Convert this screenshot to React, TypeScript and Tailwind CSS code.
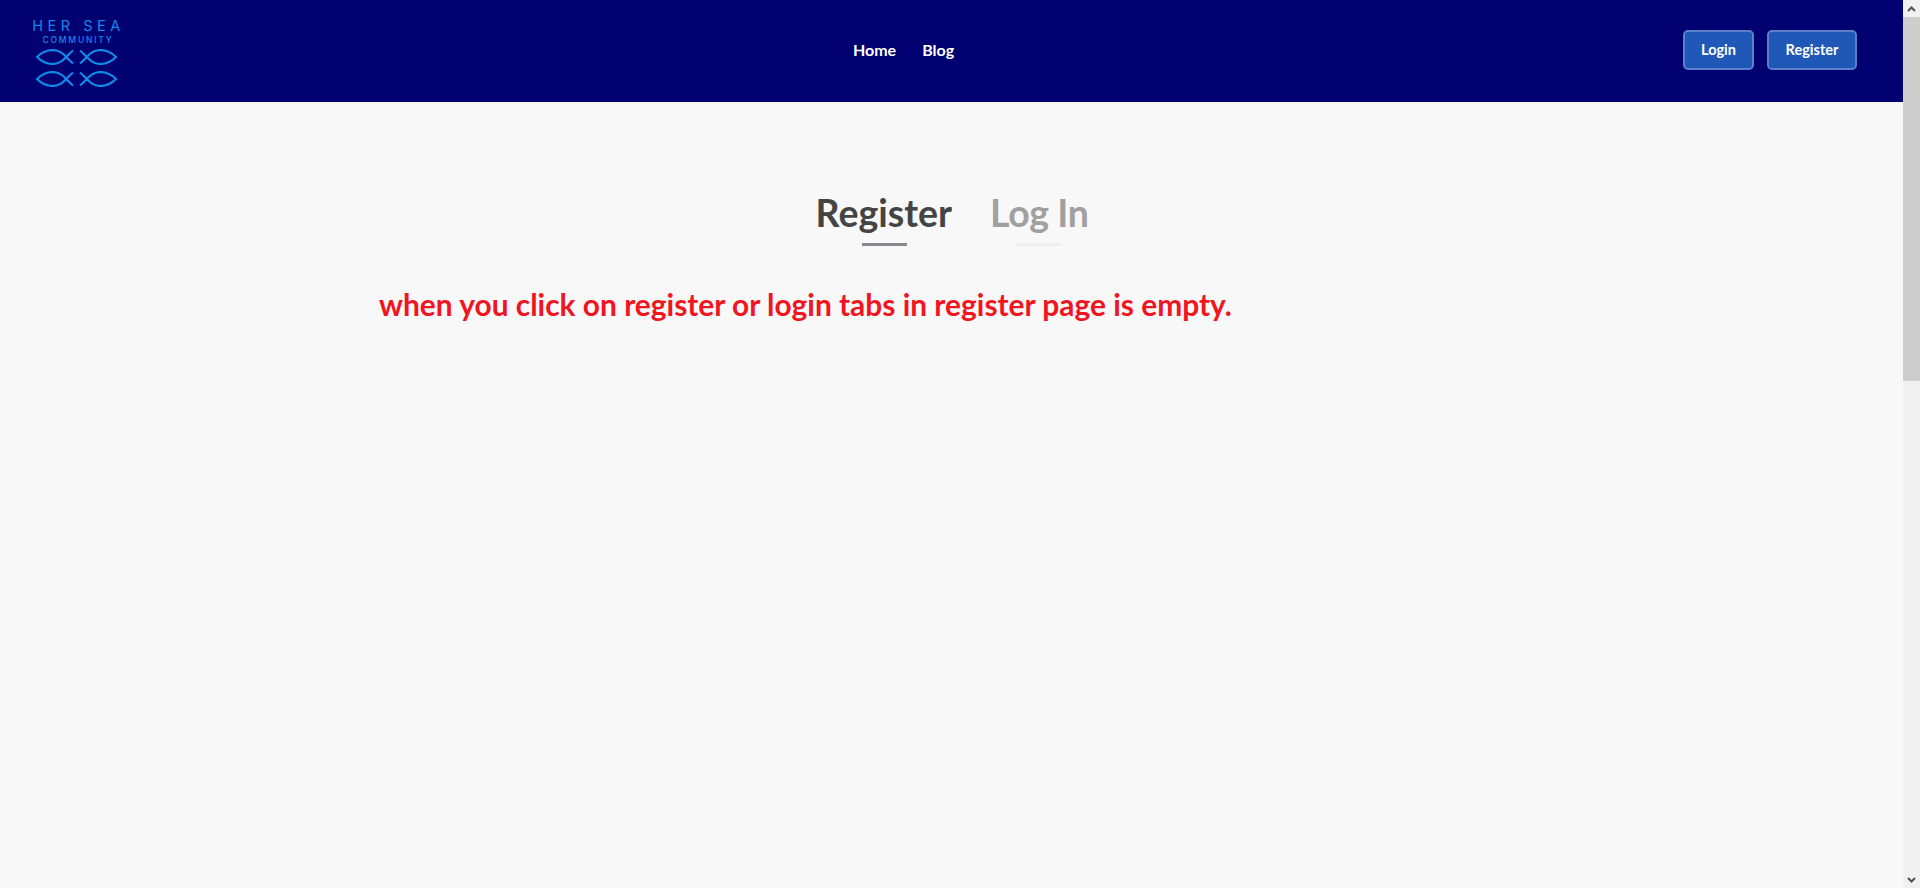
function Fish({ flip }: { flip?: boolean }) {
  return (
    <svg width="38" height="16" viewBox="0 0 38 16" fill="none" stroke="#0f8ae8" strokeWidth="2.2" style={flip ? { transform: "scaleX(-1)" } : undefined}>
      <path d="M37 1.5 C30 7 27 14.5 17 15 C10 15 4 11 1 8 C4 5 10 1 17 1 C27 1.5 30 9 37 14.5" />
    </svg>
  );
}

function Logo() {
  return (
    <div className="flex w-[90px] flex-col items-center text-[#0f8ae8]" style={{ fontFamily: "Inter, sans-serif" }}>
      <div className="mt-[2px] mr-[-3px] text-[14.5px] leading-[16px] tracking-[4.5px] whitespace-nowrap">HER SEA</div>
      <div className="mt-[1px] mr-[-2px] text-[8.5px] leading-[10px] font-medium tracking-[1.8px] whitespace-nowrap">COMMUNITY</div>
      <div className="mt-[4px] ml-[-2px] flex gap-[5px]"><Fish /><Fish flip /></div>
      <div className="mt-[6px] ml-[-2px] flex gap-[5px]"><Fish /><Fish flip /></div>
    </div>
  );
}

export default function App() {
  return (
    <div className="flex h-[888px] overflow-hidden bg-[#f8f8f9]" style={{ fontFamily: "Lato, sans-serif" }}>
      <div className="min-w-0 flex-1">
        <header className="flex h-[102px] items-center justify-between bg-[#000070] pr-[46px] pl-[32px]">
          <Logo />
          <nav className="-mt-[3px] ml-[2px] flex gap-[26px] text-[16px] font-bold text-white">
            <span>Home</span>
            <span>Blog</span>
          </nav>
          <div className="-mt-[2px] flex gap-[13px] text-[14.5px] font-bold text-white">
            <span className="flex h-[40px] w-[71px] items-center justify-center rounded-[5px] border-2 border-[#5a80cc] bg-[#2058b8]">Login</span>
            <span className="flex h-[40px] w-[90px] items-center justify-center rounded-[5px] border-2 border-[#5a80cc] bg-[#2058b8]">Register</span>
          </div>
        </header>
        <main>
          <div className="mt-[91px] ml-[1px] flex justify-center gap-[38px] text-[37.5px] leading-[40px] font-bold">
            <div className="flex flex-col items-center text-[#444444]">
              <span>Register</span>
              <span className="mt-[10px] ml-[2px] h-[3px] w-[45px] bg-[#88888e]"></span>
            </div>
            <div className="flex flex-col items-center text-[#a0a0a0]">
              <span className="tracking-[-0.4px]">Log In</span>
              <span className="mt-[10px] mr-[2px] h-[3px] w-[45px] bg-[#eeeeee]"></span>
            </div>
          </div>
          <p className="mt-[38px] ml-[379px] text-[29.9px] leading-[40px] font-bold whitespace-nowrap text-[#f01520]">
            when you click on register or login tabs in register page is empty.
          </p>
        </main>
      </div>
      <div className="flex w-[17px] flex-col bg-[#f1f1f1]">
        <div className="flex h-[17px] items-center justify-center bg-[#f1f1f1]">
          <svg width="9" height="6" viewBox="0 0 9 6" fill="none" stroke="#505050" strokeWidth="2"><path d="M1 5 L4.5 1.5 L8 5" /></svg>
        </div>
        <div className="h-[364px] bg-[#cdcdcd]"></div>
        <div className="flex-1"></div>
        <div className="flex h-[17px] items-center justify-center">
          <svg width="9" height="6" viewBox="0 0 9 6" fill="none" stroke="#505050" strokeWidth="2"><path d="M1 1 L4.5 4.5 L8 1" /></svg>
        </div>
      </div>
    </div>
  );
}
